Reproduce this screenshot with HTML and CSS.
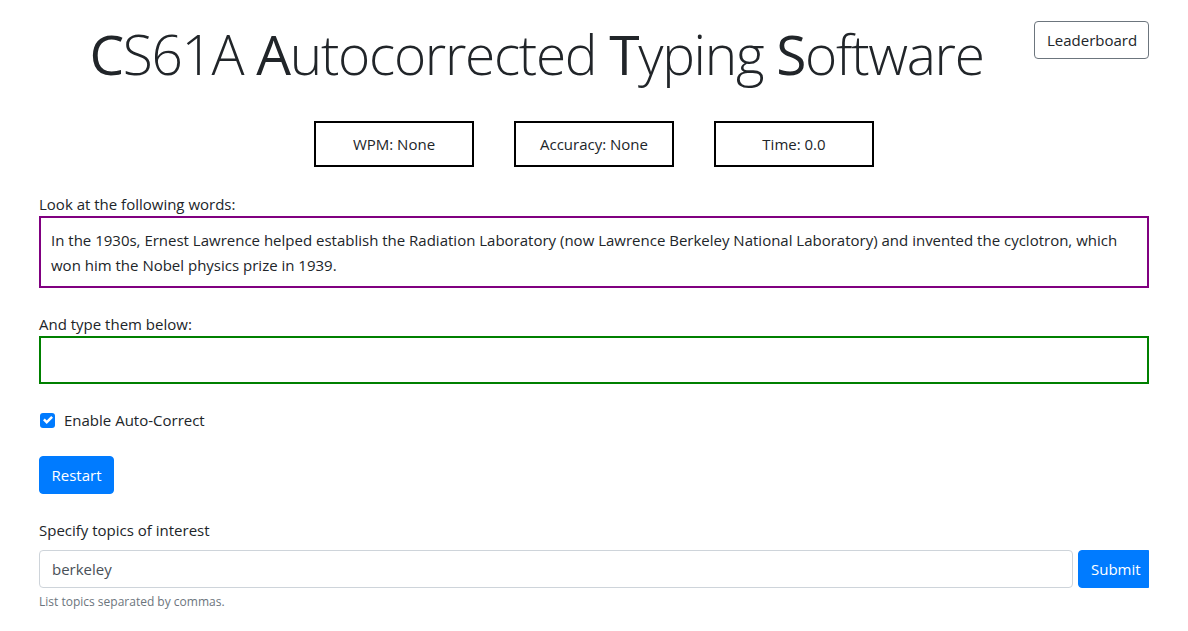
FILE: index.html
```html
<!DOCTYPE html>
<html lang="en">
<head>
<meta charset="utf-8">
<title>CS61A Autocorrected Typing Software</title>
<link rel="stylesheet" href="styles.css">
</head>
<body>
<div class="container">
  <header class="header">
    <h1 class="title"><span class="cap">C</span>S61A <span class="cap">A</span>utocorrected <span class="cap">T</span>yping <span class="cap">S</span>oftware</h1>
    <button class="btn btn-outline">Leaderboard</button>
  </header>

  <div class="stats">
    <div class="stat">WPM: None</div>
    <div class="stat">Accuracy: None</div>
    <div class="stat">Time: 0.0</div>
  </div>

  <div class="label">Look at the following words:</div>
  <div class="prompt">In the 1930s, Ernest Lawrence helped establish the Radiation Laboratory (now Lawrence Berkeley National Laboratory) and invented the cyclotron, which won him the Nobel physics prize in 1939.</div>

  <div class="label label-type">And type them below:</div>
  <div class="typebox"></div>

  <label class="check">
    <span class="checkbox"><svg width="10" height="10" viewBox="0 0 8 8"><path fill="#fff" d="M6.564.75l-3.59 3.612-1.538-1.55L0 4.26 2.974 7.25 8 2.193z"/></svg></span>
    <span>Enable Auto-Correct</span>
  </label>

  <button class="btn btn-primary btn-restart">Restart</button>

  <div class="topics">
    <div class="topics-label">Specify topics of interest</div>
    <div class="input-row">
      <div class="input">berkeley</div>
      <button class="btn btn-primary btn-submit">Submit</button>
    </div>
    <div class="help">List topics separated by commas.</div>
  </div>
</div>
</body>
</html>
```

FILE: styles.css
```css
* { box-sizing: border-box; }
html, body { margin: 0; padding: 0; background: #fff; }
body {
  font-family: "Open Sans", "Noto Sans", sans-serif;
  font-size: 15px;
  line-height: 24px;
  color: #212529;
}
.container {
  width: 1110px;
  margin: 0 auto;
}
.header {
  display: flex;
  align-items: flex-start;
  padding-top: 21px;
}
.title {
  flex: 1;
  margin: 0;
  text-align: center;
  font-size: 55px;
  font-weight: 300;
  line-height: 70px;
  letter-spacing: -1.3px;
  color: #212529;
  margin-top: -2px;
}
.cap { font-weight: 400; }
.btn {
  font-family: inherit;
  font-size: 15px;
  line-height: 24px;
  padding: 6px 12px;
  border-radius: 4px;
  cursor: pointer;
}
.btn-outline {
  background: #fff;
  border: 1px solid #6c757d;
  color: #212529;
  height: 38px;
  width: 115px;
}
.stats {
  display: flex;
  justify-content: center;
  gap: 40px;
  margin-top: 32px;
}
.stat {
  width: 160px;
  height: 46px;
  border: 2px solid #000;
  display: flex;
  align-items: center;
  justify-content: center;
}
.label {
  margin-top: 25px;
}
.prompt {
  border: 2px solid #800080;
  padding: 10px 10px;
  line-height: 25px;
  height: 72px;
}
.label-type {
  margin-top: 24px;
}
.typebox {
  border: 2px solid #008000;
  height: 48px;
}
.check {
  display: flex;
  align-items: center;
  gap: 9px;
  margin-top: 24px;
  padding-left: 1px;
}
.checkbox {
  width: 15px;
  height: 15px;
  background: #007bff;
  border-radius: 3px;
  display: flex;
  align-items: center;
  justify-content: center;
}
.btn-primary {
  display: block;
  background: #007bff;
  border: 1px solid #007bff;
  color: #fff;
  height: 38px;
  margin-top: 24px;
}
.btn-restart {
  width: 75px;
  padding: 6px 0;
}
.topics { margin-top: 24px; }
.input-row {
  display: flex;
  gap: 5px;
  margin-top: 8px;
}
.input {
  flex: 1;
  height: 38px;
  border: 1px solid #ced4da;
  border-radius: 4px;
  padding: 6px 12px;
  color: #495057;
}
.btn-submit {
  margin-top: 0;
  border-radius: 4px 0 0 4px;
  width: 71px;
  padding: 6px 12px;
}
.help {
  margin-top: 4px;
  font-size: 12px;
  line-height: 19px;
  color: #6c757d;
}
```
